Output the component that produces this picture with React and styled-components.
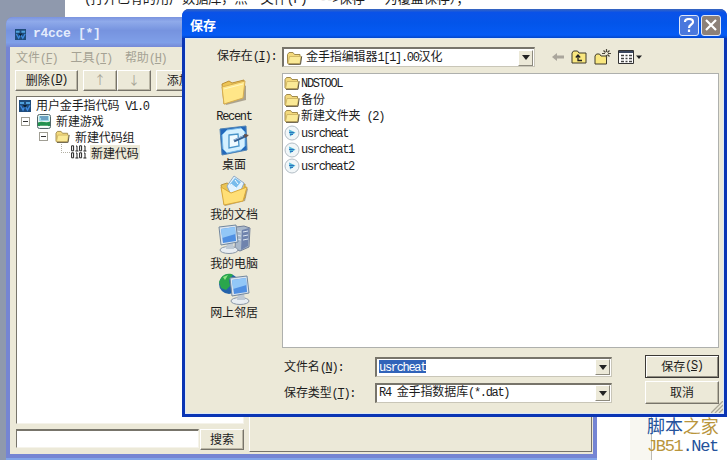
import React from "react";
import styled, { createGlobalStyle, css } from "styled-components";

const GlobalStyle = createGlobalStyle`
  * {
    box-sizing: border-box;
  }

  body {
    margin: 0;
    overflow: hidden;
    background: #fff;
  }
`;

// latin runs sit on a half-width grid, next to full-width 12px hanzi
const Text = ({ children }) =>
  children
    .split(/([\x20-\x7e]+)/)
    .filter(Boolean)
    .map((part, i) => (/^[\x20-\x7e]/.test(part) ? <Latin key={i}>{part}</Latin> : part));

const Key = ({ text, letter }) => (
  <>
    {text}
    <Latin>
      (<u>{letter}</u>)
    </Latin>
  </>
);

const Folder = ({ w = 16, h = 14 }) => (
  <svg width={w} height={h} viewBox="0 0 16 14">
    <path d="M1 3.5 2.5 1.5h4L8 3.5h5.5V12L12 13H2L1 12z" fill="#f3d97c" stroke="#a08a4c" />
    <path d="M1.5 12.5 3 5.5h11.5L13.500 12.500H2z" fill="#fae996" stroke="#c9ae5e" strokeWidth=".8" />
    <path d="M2 13.300h12l1.200-8" fill="none" stroke="#5c5440" strokeWidth="1" />
  </svg>
);

const DatFile = () => (
  <svg width="16" height="16" viewBox="0 0 16 16">
    <circle cx="8" cy="8" r="7" fill="#f1f6f8" stroke="#b3bec6" />
    <path d="M5 4.5 11.5 7.5 6 11.500z" fill="#54b8d8" />
    <path d="M5 7.500h5M6 9.500h3" stroke="#2f74bd" strokeWidth="1.1" />
  </svg>
);

const AppIcon = ({ s = 12 }) => (
  <svg width={s} height={s} viewBox="0 0 12 12">
    <path d="M0 0h12v12H0z" fill="#1f4c7c" />
    <path d="M1 2h4v2H1zM7 2h4v2H7z" fill="#4fa1dd" />
    <path d="M1.5 5.5 4 10l2-4 2.5 4L11 5.5" fill="none" stroke="#3d8ae0" strokeWidth="1.4" />
    <path d="M4 5h4L6 8z" fill="#0c1c2b" />
  </svg>
);

const GameIcon = () => (
  <svg width="14" height="15" viewBox="0 0 14 15">
    <rect x=".5" y=".5" width="13" height="14" rx="2" fill="#e4f4f1" stroke="#52676b" />
    <path d="M2 2h10v5H2z" fill="#9edbe8" />
    <path d="M3 3h8M4 5h7" stroke="#3b6b9d" />
    <path d="M1 8.500c4-2 8 1 12-1v4.500H1z" fill="#219250" />
    <path d="M3 12.500h8" stroke="#fff" strokeWidth="1.5" />
  </svg>
);

const Binary = () => (
  <svg width="16" height="14" viewBox="0 0 16 14" fill="none" stroke="#222">
    {[0, 7].map((y) => (
      <g key={y} transform={`translate(0 ${y})`}>
        <path d="M.6.8h2v5h-2zM8.6.8h2v5h-2zM5 1h1v5M4.4 6h3M13 1h1v5M12.4 6h3" />
      </g>
    ))}
  </svg>
);

const RecentIcon = () => (
  <svg width="28" height="28" viewBox="0 0 28 28">
    <path d="m4 24 2 3 20-5V8l-3-2z" fill="#90846f" opacity=".7" />
    <path d="M2 6 9 3l3 2 12-3-2 17L4 26z" fill="#edc454" stroke="#bb8f35" />
    <path d="m2 9 23-6-2 17-19 6z" fill="#ffe688" stroke="#d7ae50" />
    <path d="m4 11 19-5" stroke="#fff7c3" />
  </svg>
);

const DesktopIcon = () => (
  <svg width="31" height="31" viewBox="0 0 31 31">
    <path d="m1 4 26-3 1 24-25 5z" fill="#2368bb" stroke="#5184b4" />
    <path d="m8 5 14-2 4 4 0 14-4 4-14 3-4-4-1-14z" fill="#d4f0ff" stroke="#76b9e9" />
    <path d="m10 10 9-1 1 12-10 2z" fill="#effaff" stroke="#4994c9" strokeWidth="1.3" />
    <path d="m15 16 9-4 4-2" fill="none" stroke="#345f90" strokeWidth="3" />
    <path d="m15 15 9-4" stroke="#9bbce4" />
    <path d="m25 9 5 1-4 3z" fill="#6c5144" />
  </svg>
);

const DocumentsIcon = () => (
  <svg width="30" height="31" viewBox="0 0 30 31">
    <path d="m4 28 2 3 20-5 3-12-3-3z" fill="#897457" opacity=".6" />
    <path d="m2 10 6-2 4 2 14-1 0 14-20 6z" fill="#eac454" stroke="#bc973f" />
    <path d="m8 11 7-10 10 7-5 12-8 0z" fill="#e2f3ff" stroke="#90abc7" />
    <path d="m11 9 5-6 6 4-5 6z" fill="#78bcec" />
    <path d="m12 9 5 4m-1-8 3 4" stroke="#fff" />
    <path d="m2 12 10 6 16-6-4 14-19 4z" fill="#ffdf76" stroke="#d8a83b" />
  </svg>
);

const Monitor = () => (
  <>
    <ellipse cx="11" cy="26" rx="9" ry="3.5" fill="#e8edf2" stroke="#8a96a5" />
    <path d="M9 18h6l1 7H8z" fill="#bec9d4" />
    <path d="m1 3 17-2 2 17-17 3z" fill="#dae4ef" stroke="#72879d" />
    <path d="m3 5 14-2 1 14-13 2z" fill="#4f8fe2" />
    <path d="m3 5 14-2 .5 7L4 14z" fill="#92c7f7" />
  </>
);

const ComputerIcon = () => (
  <svg width="33" height="30" viewBox="0 0 33 30">
    <path d="m18 3 8-1 6 2-1 19-9 4-5-2z" fill="#a9b8ca" stroke="#727f98" />
    <path d="m24 6 7-2-1 18-7 4z" fill="#6f83ad" />
    <path d="m19 7 4 1m-4 3 4 1m-4 3 4 1m2-8 5-1m-5 5 5-1m-5 5 5-1" stroke="#dce6f0" />
    <Monitor />
  </svg>
);

const NetworkIcon = () => (
  <svg width="33" height="32" viewBox="0 0 33 32">
    <circle cx="11" cy="11" r="10" fill="#2462aa" />
    <path d="M3 5C6 0 13 0 15 2l-4 5 1 6-4 4-5-2-2-6z" fill="#2aa64c" />
    <path d="m5 4 5-2-3 5z" fill="#8ee585" />
    <g transform="translate(11 2)">
      <Monitor />
    </g>
  </svg>
);

const Arrow = () => (
  <svg width="8" height="5" viewBox="0 0 8 5">
    <path d="M0 0h8L4 5z" fill="#222" />
  </svg>
);

const places = [
  { name: "Recent", icon: <RecentIcon /> },
  { name: "桌面", icon: <DesktopIcon /> },
  { name: "我的文档", icon: <DocumentsIcon /> },
  { name: "我的电脑", icon: <ComputerIcon /> },
  { name: "网上邻居", icon: <NetworkIcon /> },
];

const files = [
  { name: "NDSTOOL", dir: true },
  { name: "备份", dir: true },
  { name: "新建文件夹 (2)", dir: true },
  { name: "usrcheat" },
  { name: "usrcheat1" },
  { name: "usrcheat2" },
];

const EditorWindow = () => (
  <Editor>
    <EditorTitle>
      <AppIcon s={11} />
      <Text>r4cce [*]</Text>
    </EditorTitle>
    <EditorBody>
      <Menu>
        <span><Key text="文件" letter="F" /></span>
        <span><Key text="工具" letter="T" /></span>
        <span><Key text="帮助" letter="H" /></span>
      </Menu>
      <Toolbar>
        <Button $w={63}><Key text="删除" letter="D" /></Button>
        <Pair>
          <Button $w={34} $off>↑</Button>
          <Button $w={34} $off>↓</Button>
        </Pair>
        <Button $w={63}><Key text="添加" letter="A" /></Button>
      </Toolbar>
      <Split>
        <Left>
          <Tree>
            <Node $level={0}><AppIcon /><span><Text>用户金手指代码 V1.0</Text></span></Node>
            <Node $level={1}><Toggle /><GameIcon /><Text>新建游戏</Text></Node>
            <Node $level={2}><Toggle /><Folder w={15} h={13} /><Text>新建代码组</Text></Node>
            <Node $level={3}><Elbow /><Binary /><Picked>新建代码</Picked></Node>
          </Tree>
          <Search>
            <SearchInput />
            <Button $w={44}>搜索</Button>
          </Search>
        </Left>
        <Detail />
      </Split>
    </EditorBody>
  </Editor>
);

const SaveDialog = () => (
  <Dialog>
    <DialogTitle>
      <b>保存</b>
      <TitleButton>
        <svg width="12" height="14" viewBox="0 0 12 14" fill="none" stroke="#fff" strokeWidth="2.2">
          <path d="M2 4c0-4 8-4 8 0 0 3-4 2-4 6M6 11.5V14" />
        </svg>
      </TitleButton>
      <TitleButton $close>
        <svg width="12" height="12" viewBox="0 0 12 12" stroke="#fff" strokeWidth="2.2">
          <path d="m1 1 10 10M11 1 1 11" />
        </svg>
      </TitleButton>
    </DialogTitle>
    <DialogBody>
      <LookIn>
        <LookLabel><Key text="保存在" letter="I" /><Latin>:</Latin></LookLabel>
        <Combo $w={253}>
          <Folder w={17} h={14} />
          <Value><Text>金手指编辑器1[1].00汉化</Text></Value>
          <Drop><Arrow /></Drop>
        </Combo>
        <Tools>
          <svg width="12" height="10" viewBox="0 0 12 10">
            <path d="M0 5 5 1v2.5h7v3H5V9z" fill="#aaa69c" />
          </svg>
          <svg width="16" height="14" viewBox="0 0 16 14">
            <path d="M1 3 2.5 1h4L8 3h7v10H1z" fill="#f9e77f" stroke="#3e3a2b" />
            <path d="M11 10.5H7V6M4.8 7.5 7 5l2.2 2.5" fill="none" stroke="#222" strokeWidth="1.3" />
          </svg>
          <svg width="17" height="16" viewBox="0 0 17 16">
            <path d="M1 7 2.5 5h3L7 7h5.500v8H1z" fill="#f9e77f" stroke="#3e3a2b" />
            <path d="M12.500 0v3M12.500 6v3M8 4.500h3M14 4.500h3M9.500 1.500l2 2M15.500 1.500l-2 2M15.500 7.500l-2-2" stroke="#4a463a" strokeWidth="1.2" />
          </svg>
          <svg width="24" height="14" viewBox="0 0 24 14">
            <path d="M.5.5h15v13H.5z" fill="#fff" stroke="#333" />
            <path d="M1 2h14" stroke="#39465f" strokeWidth="2" />
            <path d="M3 5.5h3m1.500 0h2m1.500 0h3M3 8.500h3m1.500 0h2m1.500 0h3M3 11.500h3m1.500 0h2m1.500 0h3" stroke="#444" strokeWidth="1.5" />
            <path d="M18 5.500h6l-3 3.500z" fill="#222" />
          </svg>
        </Tools>
      </LookIn>
      <Main>
        <Places>
          {places.map((place) => (
            <Place key={place.name}>
              <PlaceIcon>{place.icon}</PlaceIcon>
              <span><Text>{place.name}</Text></span>
            </Place>
          ))}
        </Places>
        <Content>
          <FileList>
            {files.map((file) => (
              <File key={file.name}>
                {file.dir ? <Folder w={16} h={14} /> : <DatFile />}
                <span><Text>{file.name}</Text></span>
              </File>
            ))}
          </FileList>
          <Form>
            <Label><Key text="文件名" letter="N" /><Latin>:</Latin></Label>
            <Combo $w={237}>
              <Selection><Text>usrcheat</Text></Selection>
              <Drop><Arrow /></Drop>
            </Combo>
            <Button $w={74} $h={23} $primary><Key text="保存" letter="S" /></Button>
            <Label><Key text="保存类型" letter="T" /><Latin>:</Latin></Label>
            <Combo $w={237}>
              <Value><Text>R4 金手指数据库(*.dat)</Text></Value>
              <Drop><Arrow /></Drop>
            </Combo>
            <Button $w={74} $h={23}>取消</Button>
          </Form>
        </Content>
      </Main>
      <Grip width="12" height="12" viewBox="0 0 12 12">
        <path d="M0 12 12 0M4 12l8-8M8 12l4-4" stroke="#aaa797" strokeWidth="1.3" />
      </Grip>
    </DialogBody>
  </Dialog>
);

const App = () => (
  <Screen>
    <GlobalStyle />
    <Caption><Text>(打开已有的用户数据库，点“文件(F)”-->保存” 为覆盖保存）；</Text></Caption>
    <Corner />
    <Scroll />
    <EditorWindow />
    <SaveDialog />
    <Watermark>
      <div>脚本<i>之家</i></div>
      <Site><i>JB51</i>.Net</Site>
    </Watermark>
  </Screen>
);

const Latin = styled.span`
  font-family: "Liberation Mono", monospace;
  letter-spacing: -0.11em;
  white-space: pre;
`;

const Screen = styled.div`
  position: relative;
  width: 728px;
  height: 460px;
  overflow: hidden;
  background: #fff;
  color: #1c1c1c;
  font: 12px/16px "Noto Sans CJK SC", sans-serif;
  letter-spacing: -0.1px;
  white-space: nowrap;

  svg {
    display: block;
    flex: none;
  }
`;

const Caption = styled.div`
  position: absolute;
  left: 84px;
  top: -10px;
  font-size: 13.2px;
`;

const Corner = styled.div`
  position: absolute;
  left: 0;
  top: 0;
  width: 65px;
  height: 460px;
  background: #8f99ad;
`;

const Scroll = styled.div`
  position: absolute;
  left: 630px;
  top: 416px;
  width: 22px;
  height: 44px;
  background: #f8f7f1;
  border-right: 1px solid #bdbcb5;
`;

const Editor = styled.div`
  position: absolute;
  left: 6px;
  top: 17px;
  width: 591px;
  height: 443px;
  padding: 0 4px 4px;
  display: flex;
  flex-direction: column;
  background: #7585d3;
  border-bottom: 2px solid #82a4e8;
  border-radius: 7px 7px 0 0;
`;

const EditorTitle = styled.div`
  height: 30px;
  margin: 0 -4px;
  padding: 4px 0 0 9px;
  display: flex;
  align-items: center;
  gap: 7px;
  color: #e3ebfc;
  border-radius: 7px 7px 0 0;
  background: linear-gradient(#7b93df, #8faaea 15%, #7693df 45%, #7f9fe8 85%, #7589d6);

  ${Latin} {
    font-size: 13px;
    font-weight: bold;
    letter-spacing: -0.3px;
  }
`;

const EditorBody = styled.div`
  flex: 1;
  display: flex;
  flex-direction: column;
  background: #ece9d8;
`;

const Menu = styled.div`
  height: 20px;
  padding: 2px 6px;
  display: flex;
  gap: 13px;
  color: #a5a294;
`;

const Toolbar = styled.div`
  display: flex;
  gap: 5px;
  padding: 3px 5px 5px;
`;

const Pair = styled.div`
  display: flex;
`;

const Button = styled.button`
  width: ${({ $w }) => $w}px;
  height: ${({ $h }) => $h || 21}px;
  flex: none;
  padding: 0 0 1px;
  display: flex;
  align-items: center;
  justify-content: center;
  font: inherit;
  letter-spacing: inherit;
  color: ${({ $off }) => ($off ? "#a5a294" : "#1c1c1c")};
  background: #ece9d8;
  border: 1px solid;
  border-color: #fff #77746a #77746a #fff;
  box-shadow: inset -1px -1px #bab6a5;

  ${({ $primary }) =>
    $primary &&
    css`
      border-color: #3b3935;
      box-shadow: inset 1px 1px #fff, inset -1px -1px #8f8c80;
    `}
`;

const Split = styled.div`
  flex: 1;
  display: flex;
  gap: 5px;
  padding: 0 0 2px 6px;
`;

const Left = styled.div`
  width: 228px;
  display: flex;
  flex-direction: column;
`;

const Tree = styled.div`
  height: 328px;
  padding: 1px 2px;
  background: #fff;
  border: 1px solid;
  border-color: #77746a #f5f3ea #f5f3ea #77746a;
`;

const Node = styled.div`
  height: 15.5px;
  padding-left: ${({ $level }) => [0, 2, 20, 42][$level]}px;
  display: flex;
  align-items: center;
  gap: 5px;
`;

const Toggle = styled.i`
  width: 9px;
  height: 9px;
  margin-right: 2px;
  border: 1px solid #a09e94;
  background: linear-gradient(#333, #333) center / 5px 1px no-repeat;
`;

const Elbow = styled.i`
  width: 9px;
  height: 9px;
  margin: -8px -4px 0 0;
  border: 1px dotted #b3b0a4;
  border-width: 0 0 1px 1px;
`;

const Picked = styled.span`
  height: 15px;
  line-height: 15px;
  margin-left: -2px;
  padding: 0 1px;
  background: #ece9d8;
`;

const Search = styled.div`
  margin-top: 5px;
  display: flex;
  gap: 1px;
`;

const SearchInput = styled.div`
  width: 183px;
  height: 19px;
  background: #fff;
  border: 1px solid;
  border-width: 2px 1px 1px;
  border-color: #77746a #f5f3ea #f5f3ea #77746a;
`;

const Detail = styled.div`
  flex: 1;
  margin-right: 1px;
  border: 1px solid;
  border-color: #fff #77746a #77746a #fff;
`;

const Dialog = styled.div`
  position: absolute;
  left: 182px;
  top: 9px;
  width: 545px;
  height: 408px;
  padding: 0 3px 3px;
  display: flex;
  flex-direction: column;
  background: #0a35b4;
  border-radius: 7px 7px 0 0;
`;

const DialogTitle = styled.div`
  height: 29px;
  margin: 0 -3px;
  padding: 3px 6px 0 8px;
  display: flex;
  align-items: center;
  gap: 2px;
  color: #fff;
  border-radius: 7px 7px 0 0;
  background: linear-gradient(#3a66bd, #0a52e8 12%, #0355ea 50%, #055bf5 90%, #0346ca);

  b {
    flex: 1;
    font-size: 13px;
  }
`;

const TitleButton = styled.div`
  width: 20px;
  height: 21px;
  display: flex;
  align-items: center;
  justify-content: center;
  background: ${({ $close }) => ($close ? "#8d8178" : "#4a78dd")};
  border: 1px solid #dfe7f8;
  border-radius: 3px;
`;

const DialogBody = styled.div`
  position: relative;
  flex: 1;
  display: flex;
  flex-direction: column;
  background: #ece9d8;
  border: 1px solid #dce8f5;
`;

const LookIn = styled.div`
  height: 34px;
  padding: 8px 0 0 31px;
  display: flex;
  align-items: flex-start;
`;

const LookLabel = styled.div`
  width: 65px;
`;

const Combo = styled.div`
  width: ${({ $w }) => $w}px;
  height: 20px;
  padding: 1px 1px 1px 2px;
  display: flex;
  align-items: center;
  background: #fff;
  border: 1px solid;
  border-width: 2px 1px 1px 2px;
  border-color: #77746a #c9c6b8 #c9c6b8 #77746a;

  svg + span {
    margin-left: 3px;
  }
`;

const Value = styled.span`
  flex: 1;
  margin-top: -2px;
`;

const Selection = styled.span`
  height: 13px;
  line-height: 12px;
  margin: -1px auto 0 0;
  color: #fff;
  background: #3163b9;
`;

const Drop = styled.div`
  width: 15px;
  height: 16px;
  display: flex;
  align-items: center;
  justify-content: center;
  background: #ece9d8;
  border: 1px solid;
  border-color: #fff #8d8a7e #8d8a7e #fff;
`;

const Tools = styled.div`
  height: 20px;
  margin-left: 17px;
  display: flex;
  align-items: center;
  gap: 7px;
`;

const Main = styled.div`
  flex: 1;
  display: flex;
`;

const Places = styled.div`
  width: 96px;
  padding-top: 3px;
`;

const Place = styled.div`
  height: 49.3px;
  display: flex;
  flex-direction: column;
  align-items: center;
`;

const PlaceIcon = styled.div`
  height: 31px;
  display: flex;
  align-items: center;
`;

const Content = styled.div`
  width: 437px;
`;

const FileList = styled.div`
  height: 275px;
  padding: 1px 1px;
  background: #fff;
  border: 1px solid #aeb0ad;
`;

const File = styled.div`
  height: 16.6px;
  display: flex;
  align-items: center;
  gap: 1px;

  span {
    margin-top: -1px;
  }
`;

const Form = styled.div`
  padding: 7px 0 0 2px;
  display: grid;
  grid-template-columns: 91px 270px 74px;
  grid-auto-rows: 23px;
  row-gap: 3px;
  align-items: center;
`;

const Label = styled.span``;

const Grip = styled.svg`
  position: absolute;
  right: 0;
  bottom: 0;
`;

const Watermark = styled.div`
  position: absolute;
  left: 647px;
  top: 415px;
  color: #24529b;
  font-size: 18px;
  line-height: 20px;

  i {
    color: #b9953c;
    font-style: normal;
  }
`;

const Site = styled.div`
  margin-top: 2px;
  font-family: "Liberation Mono", monospace;
  font-size: 17px;
  letter-spacing: -1.35px;
`;

export default App;
